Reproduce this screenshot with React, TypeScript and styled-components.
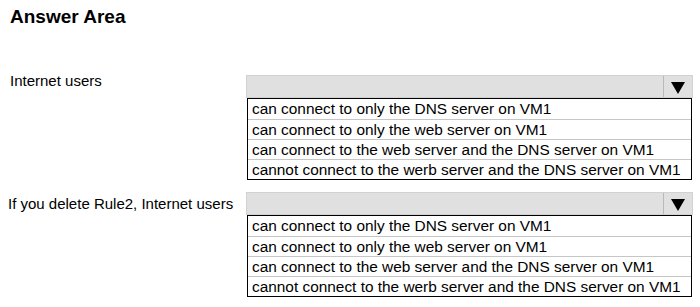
import React from 'react'
import styled, { createGlobalStyle } from 'styled-components'

const GlobalStyle = createGlobalStyle`
    body {
        margin: 0;
        background: #ffffff;
        font-family: 'Liberation Sans', Arial, sans-serif;
        color: #000000;
    }
`

const Page = styled.div`
    width: 700px;
    height: 307px;
    padding: 5px 0 0 10px;
    box-sizing: border-box;
`

const Title = styled.h1`
    margin: 0;
    font-size: 19px;
    line-height: 23px;
    font-weight: bold;
`

const Questions = styled.div`
    display: flex;
    flex-direction: column;
    gap: 12px;
    margin-top: 47px;
`

const Row = styled.div`
    display: grid;
    grid-template-columns: 236px 447px;
    align-items: start;
`

const Label = styled.div<{ offset: number; indent: number }>`
    font-size: 15px;
    line-height: 17px;
    margin-top: ${(p) => p.offset}px;
    margin-left: ${(p) => p.indent}px;
`

const Dropdown = styled.div`
    display: flex;
    flex-direction: column;
`

const Header = styled.div`
    display: flex;
    height: 23px;
    box-sizing: border-box;
    background: #e0e0e0;
    border: 1px solid #d2d2d2;
`

const HeaderFill = styled.div`
    flex: 1;
`

const ArrowCell = styled.div`
    width: 29px;
    display: flex;
    align-items: center;
    justify-content: center;
    padding-top: 2px;
    box-sizing: border-box;
    border-left: 1px solid #b9b9b9;
`

const Options = styled.div`
    border: 1px solid #000000;
    margin-left: 1px;
    margin-right: 1px;
`

const Option = styled.div`
    height: 20px;
    box-sizing: border-box;
    padding-left: 4px;
    font-size: 15.4px;
    line-height: 19px;
    white-space: nowrap;
    & + & {
        border-top: 1px solid #c6c6c6;
    }
`

const options = [
    'can connect to only the DNS server on VM1',
    'can connect to only the web server on VM1',
    'can connect to the web server and the DNS server on VM1',
    'cannot connect to the werb server and the DNS server on VM1',
]

const questions = [
    { label: 'Internet users', offset: -3, indent: 0 },
    { label: 'If you delete Rule2, Internet users', offset: 3, indent: -2 },
]

const Arrow = () => (
    <svg width="14" height="12" viewBox="0 0 14 12">
        <polygon points="0,0 14,0 7,12" fill="#000" />
    </svg>
)

export default function App() {
    return (
        <Page>
            <GlobalStyle />
            <Title>Answer Area</Title>
            <Questions>
                {questions.map((q) => (
                    <Row key={q.label}>
                        <Label offset={q.offset} indent={q.indent}>
                            {q.label}
                        </Label>
                        <Dropdown>
                            <Header>
                                <HeaderFill />
                                <ArrowCell>
                                    <Arrow />
                                </ArrowCell>
                            </Header>
                            <Options>
                                {options.map((o) => (
                                    <Option key={o}>{o}</Option>
                                ))}
                            </Options>
                        </Dropdown>
                    </Row>
                ))}
            </Questions>
        </Page>
    )
}
